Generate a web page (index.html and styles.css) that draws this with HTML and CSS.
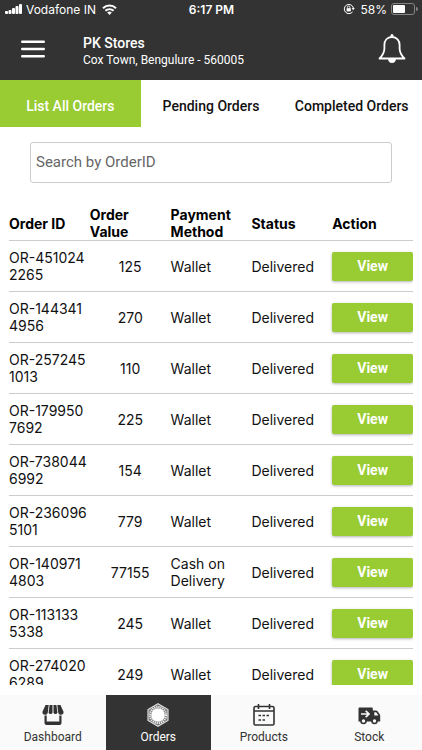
FILE: index.html
```html
<!DOCTYPE html>
<html lang="en">

<head>
  <meta charset="UTF-8">
  <meta name="viewport" content="width=device-width, initial-scale=1.0">
  <title>PK Stores - Orders</title>
  <link rel="stylesheet" href="styles.css">
</head>

<body>
  <header class="header">
    <div class="status-bar">
      <div class="status-left">
        <svg width="17" height="11" viewBox="0 0 17 11" fill="#fff">
          <rect x="0" y="7" width="3" height="3" rx="1"/>
          <rect x="3.5" y="6" width="3" height="4" rx="1"/>
          <rect x="7" y="4" width="3" height="6" rx="1"/>
          <rect x="10.5" y="2" width="3" height="8" rx="1"/>
          <rect x="14" y="0" width="3" height="10" rx="1"/>
        </svg>
        <span class="carrier">Vodafone IN</span>
        <svg width="15" height="11" viewBox="0 0 15 11" fill="none" stroke="#fff" stroke-width="2">
          <path d="M1 4.2a9.4 9.4 0 0 1 13 0"/>
          <path d="M3.4 6.8a6 6 0 0 1 8.2 0"/>
          <path d="M5.2 8.6a3.4 3.4 0 0 1 4.6 0L7.5 11z" fill="#fff" stroke="none"/>
        </svg>
      </div>
      <span class="clock">6:17 PM</span>
      <div class="status-right">
        <svg class="lock" width="12" height="12" viewBox="0 0 12 12" fill="none" stroke="#fff">
          <path d="M9.6 8.8A4.6 4.6 0 1 1 10.4 5"/>
          <path d="M8.6 5h3.2l-1.600 2.200z" fill="#fff" stroke="none"/>
          <rect x="3.6" y="5.2" width="4.2" height="3.2" fill="#fff" stroke="none"/>
          <path d="M4.5 5.4V4.2a1.2 1.2 0 0 1 2.4 0v1.2" stroke-width=".8"/>
        </svg>
        <span>58%</span>
        <svg width="27" height="12" viewBox="0 0 27 12">
          <rect x=".5" y=".5" width="23" height="11" rx="2.5" fill="none" stroke="#858585"/>
          <rect x="2" y="2" width="12" height="8" rx="1" fill="#fff"/>
          <path d="M25 4a2 2 0 0 1 0 4z" fill="#858585"/>
        </svg>
      </div>
    </div>
    <div class="app-bar">
      <button class="icon-btn" type="button" aria-label="Menu">
        <svg width="24" height="18" viewBox="0 0 24 18" stroke="#fff" stroke-width="2.4" stroke-linecap="round">
          <path d="M1.2 1.8h21.6M1.2 9h21.6M1.2 16.2h21.6"/>
        </svg>
      </button>
      <div class="store">
        <h1>PK Stores</h1>
        <p>Cox Town, Bengulure - 560005</p>
      </div>
      <button class="icon-btn" type="button" aria-label="Notifications">
        <svg width="28" height="30" viewBox="0 0 28 30" fill="none" stroke="#fff" stroke-width="1.8" stroke-linejoin="round">
          <path d="M14 3C9.2 3 6.4 6.5 6.4 11v3.5C6.4 19.5 4 22 1.5 24.500h25C24 22 21.6 19.5 21.6 14.500V11C21.6 6.5 18.8 3 14 3z"/>
          <path d="M12.5 3V1.500a1.5 1.5 0 0 1 3 0V3z" fill="#fff" stroke="none"/>
          <path d="M10.5 25.200h7a3.5 3.5 0 0 1-7 0z" fill="#fff" stroke-width=".8"/>
        </svg>
      </button>
    </div>
  </header>

  <nav class="tabs">
    <a href="#all" class="tab active">List All Orders</a>
    <a href="#pending" class="tab">Pending Orders</a>
    <a href="#completed" class="tab">Completed Orders</a>
  </nav>

  <main class="content">
    <form class="search">
      <input type="text" id="search" placeholder="Search by OrderID" aria-label="Search by OrderID">
    </form>

    <div class="orders-wrap">
      <table class="orders">
        <thead>
          <tr><th>Order ID</th><th>Order Value</th><th>Payment Method</th><th>Status</th><th>Action</th></tr>
        </thead>
        <tbody>
          <tr><td>OR-451024<br>2265</td><td class="value">125</td><td>Wallet</td><td>Delivered</td><td><button class="view-btn" type="button">View</button></td></tr>
          <tr><td>OR-144341<br>4956</td><td class="value">270</td><td>Wallet</td><td>Delivered</td><td><button class="view-btn" type="button">View</button></td></tr>
          <tr><td>OR-257245<br>1013</td><td class="value">110</td><td>Wallet</td><td>Delivered</td><td><button class="view-btn" type="button">View</button></td></tr>
          <tr><td>OR-179950<br>7692</td><td class="value">225</td><td>Wallet</td><td>Delivered</td><td><button class="view-btn" type="button">View</button></td></tr>
          <tr><td>OR-738044<br>6992</td><td class="value">154</td><td>Wallet</td><td>Delivered</td><td><button class="view-btn" type="button">View</button></td></tr>
          <tr><td>OR-236096<br>5101</td><td class="value">779</td><td>Wallet</td><td>Delivered</td><td><button class="view-btn" type="button">View</button></td></tr>
          <tr><td>OR-140971<br>4803</td><td class="value">77155</td><td>Cash on Delivery</td><td>Delivered</td><td><button class="view-btn" type="button">View</button></td></tr>
          <tr><td>OR-113133<br>5338</td><td class="value">245</td><td>Wallet</td><td>Delivered</td><td><button class="view-btn" type="button">View</button></td></tr>
          <tr><td>OR-274020<br>6289</td><td class="value">249</td><td>Wallet</td><td>Delivered</td><td><button class="view-btn" type="button">View</button></td></tr>
        </tbody>
      </table>
    </div>
  </main>

  <nav class="bottom-nav">
    <a href="#dashboard" class="nav-item">
      <svg width="24" height="24" viewBox="0 0 24 24" fill="#333">
        <path d="M4.5 2h3.2L6.8 9.5a2.3 2.3 0 0 1-5.3-.7z"/>
        <path d="M8.6 2h2.9v7.500a2 2 0 0 1-3.900 0z"/>
        <path d="M12.5 2h2.9l1 7.500a2 2 0 0 1-3.900 0z"/>
        <path d="M16.3 2h3.2l3 6.800a2.3 2.3 0 0 1-5.3.7z"/>
        <path d="M3.5 12.500h2.200v6h12.600v-6h2.200V20a2 2 0 0 1-2 2h-13a2 2 0 0 1-2-2z"/>
      </svg>
      <span>Dashboard</span>
    </a>
    <a href="#orders" class="nav-item active">
      <svg width="24" height="24" viewBox="0 0 24 24">
        <path d="M12 .8l10 5.700v11L12 23.200 2 17.500v-11z" fill="#777" stroke="#ddd" stroke-width="1.2"/>
        <circle cx="12" cy="12" r="8" fill="none" stroke="#eee" stroke-width="2.2" stroke-dasharray="1.2 .9"/>
        <circle cx="12" cy="12" r="6.8" fill="#fff"/>
      </svg>
      <span>Orders</span>
    </a>
    <a href="#products" class="nav-item">
      <svg width="24" height="24" viewBox="0 0 24 24" fill="none" stroke="#333" stroke-width="1.6">
        <rect x="2" y="3.5" width="20" height="18.5" rx="1.5"/>
        <path d="M2 8h20M6.5 1v5M17.5 1v5"/>
        <path d="M10.5 12.500h2.500M14.5 12.500h2.500M6.5 12.500h2.500M6.5 17h2.500M10.5 17h2.500"/>
      </svg>
      <span>Products</span>
    </a>
    <a href="#stock" class="nav-item">
      <svg width="24" height="24" viewBox="0 0 24 24">
        <path d="M2.5 4.500h12.300a1 1 0 0 1 1 1v2h3.200a2 2 0 0 1 1.600.8l2.200 3.200a2 2 0 0 1 .4 1.200V18.500H1.500v-13a1 1 0 0 1 1-1z" fill="#333"/>
        <path d="M17.3 9.200h1.900l2.200 3.300h-4.100z" fill="#fafafa"/>
        <path d="M4 11h7.500M8.7 7.800L12 11l-3.300 3.200" fill="none" stroke="#fafafa" stroke-width="1.7"/>
        <circle cx="6.5" cy="18" r="2.5" fill="#fafafa" stroke="#333" stroke-width="1.6"/>
        <circle cx="17.5" cy="18" r="2.5" fill="#fafafa" stroke="#333" stroke-width="1.6"/>
      </svg>
      <span>Stock</span>
    </a>
  </nav>
</body>

</html>
```
FILE: styles.css
```css
:root {
  --dark: #333333;
  --green: #99cc33;
  --line: #cccccc;
}

*,*::before,*::after { box-sizing: border-box; }

body {
  margin: 0;
  height: 100vh;
  display: flex;
  flex-direction: column;
  font-family: Roboto, "Liberation Sans", sans-serif;
  background: #ffffff;
  color: #111111;
}

a { text-decoration: none; }

/* header */
.header {
  background: var(--dark);
  color: #ffffff;
}

.status-bar {
  height: 18px;
  padding: 0 4px 0 5px;
  display: flex;
  align-items: center;
  font-family: Inter, sans-serif;
  font-size: 12px;
}

.status-left,
.status-right {
  flex: 1;
  display: flex;
  align-items: center;
  gap: 4px;
}

.status-right { justify-content: flex-end; }
.lock { margin-right: 2px; }
.carrier { margin-right: 2px; }
.clock { font-weight: 600; }

.app-bar {
  height: 62px;
  padding: 0 16px 0 21px;
  display: flex;
  align-items: center;
}

.icon-btn {
  border: none;
  padding: 0;
  background: none;
  display: flex;
  cursor: pointer;
}

.store {
  flex: 1;
  padding: 3px 0 0 38px;
}

.store h1 {
  margin: 0;
  font-size: 14px;
  line-height: 18px;
  font-weight: 500;
}

.store p {
  margin: 0;
  font-size: 12px;
  line-height: 16px;
}

/* tabs */
.tabs {
  height: 47px;
  display: flex;
}

.tab {
  flex: 1 0 0;
  display: flex;
  align-items: center;
  justify-content: center;
  padding-top: 5px;
  font-size: 14px;
  font-weight: 500;
  color: #111111;
  white-space: nowrap;
}

.tab.active {
  background: var(--green);
  color: #ffffff;
}

/* search and table */
.content {
  flex: 1;
  min-height: 0;
  display: flex;
  flex-direction: column;
  padding: 15px 9px 10px;
}

.search {
  display: flex;
  padding: 0 21px;
}

.search input {
  width: 100%;
  height: 41px;
  padding: 0 5px 2px;
  border: 1px solid var(--line);
  border-radius: 3px;
  font-family: inherit;
  font-size: 15px;
}

.search input::placeholder { color: #666666; }

.orders-wrap {
  flex: 1;
  min-height: 0;
  margin-top: 23px;
  overflow: hidden;
}

.orders {
  width: 100%;
  table-layout: fixed;
  border-collapse: collapse;
  font-family: Inter, sans-serif;
  font-size: 14px;
  line-height: 17px;
}

.orders th,
.orders td {
  padding: 0;
  border-bottom: 1px solid var(--line);
  text-align: left;
}

.orders th {
  height: 34px;
  padding-right: 10px;
  font-weight: 700;
  color: #000000;
}

.orders td { height: 51px; }
.orders .value { text-align: center; }

.view-btn {
  display: block;
  width: 100%;
  height: 29px;
  border: none;
  border-radius: 2px;
  background: var(--green);
  color: #ffffff;
  font-family: Roboto, sans-serif;
  font-size: 14px;
  font-weight: 700;
  box-shadow: 0 1px 3px rgba(0,0,0,.3);
  cursor: pointer;
}

/* bottom navigation */
.bottom-nav {
  height: 55px;
  display: flex;
  background: #fafafa;
}

.nav-item {
  flex: 1;
  display: flex;
  flex-direction: column;
  align-items: center;
  padding-top: 8px;
  gap: 2px;
  font-size: 12px;
  line-height: 16px;
  color: var(--dark);
}

.nav-item.active {
  background: var(--dark);
  color: #ffffff;
}
```
